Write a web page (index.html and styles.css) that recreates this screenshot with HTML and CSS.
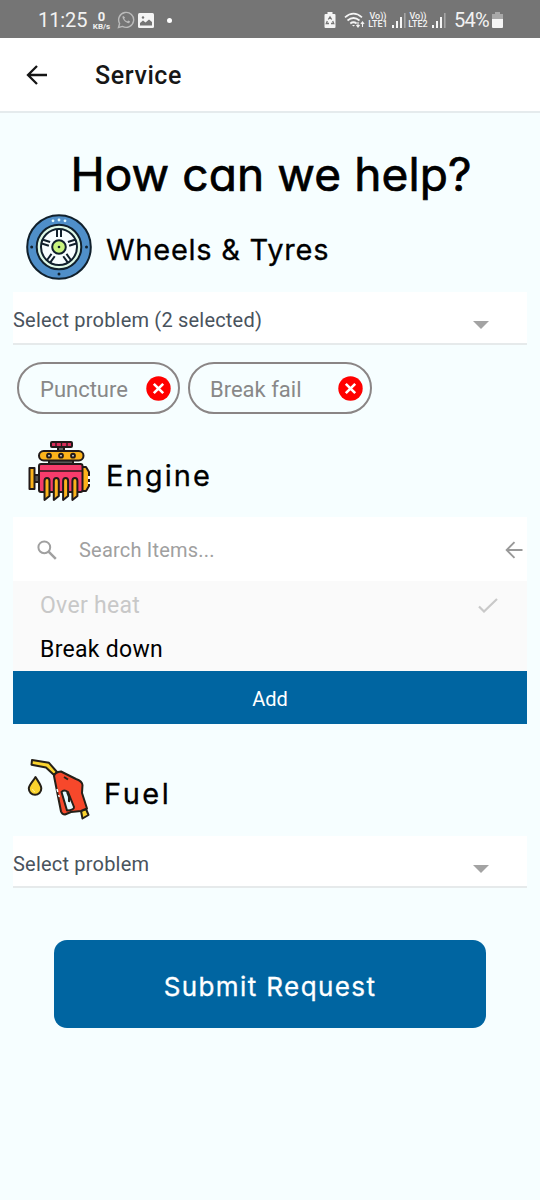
FILE: index.html
```html
<!DOCTYPE html>
<html lang="en">
<head>
<meta charset="utf-8">
<title>Service</title>
<link rel="stylesheet" href="styles.css">
</head>
<body>
<div class="status">
  <span class="clock">11:25</span>
  <span class="rate"><b>0</b><small>KB/s</small></span>
  <svg class="whatsapp" width="18" height="18" viewBox="0 0 18 18" fill="none" stroke="#bababa" stroke-width="1.4"><path d="M1.5 16.5l1.1-4A7.5 7.5 0 1 1 5.5 15.400z"/><path d="M6 4.800c-2 2 2.500 7.500 6 7.500l1.200-1.700-2-1.100-1 1C8.700 9.900 7.500 8.700 7.200 7.600l.9-1z" fill="#bababa" stroke="none"/></svg>
  <svg class="photo" width="16" height="15" viewBox="0 0 16 15"><rect width="16" height="15" rx="1.500" fill="#f4f4f4"/><path d="M2 12.500V10l3-2.500 2.500 2L11 6.500 14 9v3.500z" fill="#757575"/><circle cx="5" cy="4.500" r="1.200" fill="#757575"/></svg>
  <i class="dot"></i>
  <span class="right">
    <svg class="saver" width="12" height="16" viewBox="0 0 12 16"><path d="M3.500 0h5v2H10.500a1 1 0 0 1 1 1V15a1 1 0 0 1-1 1h-9a1 1 0 0 1-1-1V3a1 1 0 0 1 1-1h2z" fill="#f5f5f5"/><path d="M4.300 7.500L6 5l1.700 2.500M8.700 9l1 2.500H7M5 11.500H2.300l1-2.500" fill="none" stroke="#757575" stroke-width="1.300"/></svg>
    <svg class="wifi" width="22" height="17" viewBox="0 0 22 17" fill="none" stroke="#f5f5f5" stroke-width="1.700"><path d="M1 5.300Q9.500-2 18 5.300M3.500 8.500q6-5 12 0M6.300 11.500q3.200-2.500 6.300 0"/><path d="M8 13l1.500 1.500L11 13z" fill="#f5f5f5" stroke="none"/><path d="M14 10v5m-1.600-2l1.600 2 1.600-2M18.500 15V10m-1.600 2l1.600-2 1.600 2" stroke-width="1.100"/></svg>
    <span class="lte"><span>Vo))</span><span>LTE1</span></span>
    <svg class="bars" width="14" height="15" viewBox="0 0 14 15" fill="#f5f5f5"><path d="M0 12h2v3H0zM4 8h2v7H4zM8 4h2v11H8z"/><path d="M12 0h1.600v15H12z" fill="#a5a5a5"/></svg>
    <span class="lte"><span>Vo))</span><span>LTE2</span></span>
    <svg class="bars" width="14" height="15" viewBox="0 0 14 15" fill="#f5f5f5"><path d="M0 12h2v3H0zM4 8h2v7H4zM8 4h2v11H8z"/><path d="M12 0h1.600v15H12z" fill="#a5a5a5"/></svg>
    <span class="pct">54%</span>
    <svg class="battery" width="11" height="16" viewBox="0 0 11 16"><path d="M3 0h5v2h3v5H0V2h3z" fill="#a8a8a8"/><path d="M0 7h11v8a1 1 0 0 1-1 1H1a1 1 0 0 1-1-1z" fill="#f5f5f5"/></svg>
  </span>
</div>
<header class="appbar">
  <svg width="22" height="20" viewBox="0 0 22 20" fill="none" stroke="#151515" stroke-width="2.300"><path d="M21 10H2M11 1L2 10l9 9"/></svg>
  <span class="bar-title">Service</span>
</header>
<main>
  <h1><span>How can we help?</span></h1>

  <section class="group wheels">
    <h2>
      <svg width="66" height="66" viewBox="0 0 66 66" fill="none" stroke="#10202c" stroke-width="2">
        <circle cx="33" cy="33" r="31.800" fill="#4f8fc9"/>
        <circle cx="33" cy="33" r="22.300" fill="#dff9e7"/>
        <circle cx="33" cy="33" r="18" fill="#f7feff"/>
        <g><path id="spoke" d="M31 15.500v7.500M35 15.500v7.500"/><use href="#spoke" transform="rotate(72 33 33)"/><use href="#spoke" transform="rotate(144 33 33)"/><use href="#spoke" transform="rotate(216 33 33)"/><use href="#spoke" transform="rotate(288 33 33)"/></g>
        <circle cx="33" cy="33" r="6.800" fill="#c9f580"/>
        <g fill="#10202c" stroke="none"><circle cx="33" cy="33" r="1.300"/><circle cx="5.700" cy="33" r="1.500"/><circle cx="60.500" cy="33" r="1.500"/><circle cx="33" cy="60" r="1.500"/></g>
        <g fill="#e2faff" stroke="none"><circle cx="27" cy="6.800" r="1.400"/><circle cx="33" cy="6" r="1.400"/><circle cx="39" cy="6.800" r="1.400"/></g>
      </svg>
      <span>Wheels &amp; Tyres</span>
    </h2>
    <div class="select"><span>Select problem (2 selected)</span><i class="caret"></i></div>
    <div class="chips">
      <div class="chip first"><span>Puncture</span><svg width="25" height="25" viewBox="0 0 25 25"><circle cx="12.500" cy="12.500" r="12.200" fill="#f00"/><path d="M7.800 7.800l9.400 9.400M17.200 7.800l-9.400 9.400" stroke="#fff" stroke-width="2.600"/></svg></div>
      <div class="chip second"><span>Break fail</span><svg width="25" height="25" viewBox="0 0 25 25"><circle cx="12.500" cy="12.500" r="12.200" fill="#f00"/><path d="M7.800 7.800l9.400 9.400M17.200 7.800l-9.400 9.400" stroke="#fff" stroke-width="2.600"/></svg></div>
    </div>
  </section>

  <section class="group engine">
    <h2>
      <svg width="66" height="64" viewBox="0 0 66 64" stroke="#221a1a" stroke-width="2" stroke-linejoin="round">
        <path d="M32 6h6v6h-6z" fill="#666"/>
        <rect x="25" y="2" width="21" height="5" rx="1" fill="#d82e5a"/><path d="M30 2v5M35.500 2v5M41 2v5" stroke-width="1.300"/>
        <path d="M23 19h24v6H23z" fill="#595959"/>
        <rect x="13" y="11" width="44.500" height="9.500" rx="4.700" fill="#fcb31b"/>
        <g fill="#ddd"><circle cx="23" cy="15.700" r="1.900"/><circle cx="35" cy="15.700" r="1.900"/><circle cx="47" cy="15.700" r="1.900"/></g>
        <path d="M8 35h6v7H8z" fill="#555"/><rect x="3.500" y="28" width="5" height="21" fill="#fcb31b"/>
        <path d="M56 27h4l3 5v14l-3 5h-4z" fill="#fcb31b"/><path d="M63 36v3m0 3v2" stroke="#f7feff"/>
        <rect x="13" y="24" width="43.500" height="28" rx="2" fill="#f73c6b"/><path d="M13 31h43" stroke-width="1.600"/>
        <path id="pipe" d="M18.500 60V41q0-3 2.500-3t2.500 3v15z" fill="#fcb31b"/><use href="#pipe" x="9.300"/><use href="#pipe" x="18.600"/><use href="#pipe" x="27.900"/>
      </svg>
      <span>Engine</span>
    </h2>
    <div class="picker">
      <div class="search">
        <svg class="glass" width="20" height="20" viewBox="0 0 20 20" fill="none" stroke="#a0a0a0" stroke-width="2"><circle cx="7.300" cy="7.300" r="5.900"/><path d="M11.600 11.600l7.200 7.200" stroke-width="2.500"/></svg>
        <span>Search Items...</span>
        <svg class="back" width="18" height="18" viewBox="0 0 18 18" fill="none" stroke="#999" stroke-width="1.900"><path d="M17.500 9H2M9.500 1.200L1.700 9l7.800 7.800"/></svg>
      </div>
      <div class="options">
        <div class="option picked"><span>Over heat</span><svg width="20" height="15" viewBox="0 0 20 15" fill="none" stroke="#c9c9c9" stroke-width="2.200"><path d="M1 8.500l5 5L19 1"/></svg></div>
        <div class="option"><span>Break down</span></div>
      </div>
      <div class="add">Add</div>
    </div>
  </section>

  <section class="group fuel">
    <h2>
      <svg width="66" height="64" viewBox="0 0 66 64" stroke="#252018" stroke-width="2" stroke-linejoin="round">
        <path d="M6 2l17 2.800L31 14l-3 3-8-7.500L5.500 6.800z" fill="#fbd42d"/>
        <path d="M9.500 19c3 5 5.800 8 5.800 11.500a6 6 0 0 1-12.500 0C2.800 27 7 23.500 9.500 19z" fill="#fbd42d"/><path d="M6.500 31q.5 2.300 2.500 3" fill="none" stroke="#fff09a" stroke-width="1"/>
        <path d="M55 53l5-2 2.500 6-6 3.500z" fill="#fbd42d"/>
        <path d="M28 18q1-4 7-4.500l15 7.500q6 2 6.500 6l-.5 8 5 15.500-6 2.500-10 1-6 2.500q-3 0-4-3z" fill="#f7482b"/>
        <path d="M35.500 34q2.500-3 6.500 0l6 15q.4 3-7 3.500z" fill="#e4faff"/>
        <path d="M41 34q3 5 2 10M38 19l4 2.500" fill="none"/>
        <path d="M31 31l.8 3m.8 3l.7 2" stroke="#f7feff" stroke-width="1.500"/>
      </svg>
      <span>Fuel</span>
    </h2>
    <div class="select"><span>Select problem</span><i class="caret"></i></div>
  </section>

  <div class="submit"><span>Submit Request</span></div>
</main>
</body>
</html>
```
FILE: styles.css
```css
* { box-sizing: border-box; }
body { margin: 0; width: 540px; height: 1200px; overflow: hidden; background: #f6feff; font-family: Roboto, sans-serif; color: #000; }
svg { display: block; flex: none; }
.status { height: 38px; background: #757575; color: #f2f2f2; display: flex; align-items: center; padding: 2px 37px 0 38px; }
.clock { font-size: 20px; width: 54px; letter-spacing: -.1px; }
.rate { width: 19px; display: flex; flex-direction: column; align-items: center; line-height: 1; }
.rate b { font-size: 13px; line-height: 12px; }
.rate small { font-size: 8px; line-height: 7px; font-weight: 700; }
.whatsapp { margin-left: 6px; }
.photo { margin-left: 3px; }
.dot { width: 5px; height: 5px; border-radius: 50%; background: #fff; margin-left: 13px; }
.right { margin-left: auto; display: flex; align-items: center; }
.wifi { margin: 0 0 0 8px; }
.lte { display: flex; flex-direction: column; align-items: center; width: 20px; margin-left: 2px; font-size: 9px; line-height: 8px; font-weight: 500; white-space: nowrap; }
.bars { margin-left: 4px; }
.pct { font-size: 20px; margin-left: 8px; width: 36px; letter-spacing: -.8px; }
.battery { margin-left: 2px; }
.appbar { height: 75px; background: #fff; border-bottom: 2px solid #e5ebed; display: flex; align-items: center; padding: 1px 26px 0; }
.bar-title { margin-left: 47px; padding-top: 1px; font-size: 25px; font-weight: 500; color: #171717; letter-spacing: .6px; }
main { padding: 30px 13px 0; }
h1, h2, .submit { font-family: Inter, sans-serif; font-feature-settings: "cv11"; font-weight: 400; stroke-linejoin: round; -webkit-text-stroke: .3px currentColor; }
h1 { margin: 0; height: 64px; line-height: 62px; text-align: center; font-size: 46px; white-space: nowrap; letter-spacing: .1px; padding-left: 2px; -webkit-text-stroke-width: .7px; }
h2 { margin: 0; padding-left: 13px; display: flex; align-items: center; gap: 14px; font-size: 29px; letter-spacing: .75px; }
.wheels { padding-top: 6px; height: 233px; }
.wheels h2 { height: 67px; }
.wheels h2 span { padding-top: 6px; }
.select { height: 53px; background: #fff; border-bottom: 2px solid #e6eaeb; display: flex; align-items: center; justify-content: space-between; padding: 5px 38px 0 0; color: #49535d; font-size: 20px; letter-spacing: .2px; }
.wheels .select { margin-top: 12px; }
.caret { border: 8px solid transparent; border-top-color: #a3a3a3; border-bottom: 0; margin-top: 10px; }
.chips { display: flex; gap: 8px; padding: 17px 4px 0; }
.chip { height: 52px; border: 2.500px solid #8a8585; border-radius: 26px; display: flex; align-items: center; justify-content: space-between; padding: 1px 7px 0 21px; color: #888; font-size: 22px; }
.chip span { padding-top: 2px; }
.chip.first { width: 163px; }
.chip.second { width: 184px; padding-left: 20px; }
.engine { height: 318px; }
.engine h2 { height: 64px; letter-spacing: 2.100px; }
.engine h2 span { padding-top: 6px; }
.picker { margin-top: 13px; }
.search { height: 64px; background: #fff; display: flex; align-items: center; padding: 1px 4px 0 24px; font-size: 20px; color: #a0a0a0; letter-spacing: .2px; }
.search span { margin-left: 22px; }
.back { margin-left: auto; }
.options { height: 90px; background: #fafafa; padding: 2px 29px 0 27px; }
.option { height: 44px; display: flex; align-items: center; justify-content: space-between; font-size: 23px; letter-spacing: .3px; }
.picked { color: #c8c8c8; }
.add { height: 53px; background: #0065a1; color: #fff; display: flex; align-items: center; justify-content: center; padding-top: 2px; font-size: 20px; }
.fuel { height: 130px; }
.fuel h2 { height: 64px; letter-spacing: 2.500px; gap: 12px; }
.fuel h2 span { padding-top: 6px; }
.fuel .select { margin-top: 14px; height: 52px; }
.submit { margin: 52px 41px 0; height: 88px; border-radius: 13px; background: #0065a1; color: #fff; display: flex; align-items: center; justify-content: center; font-size: 26px; letter-spacing: 1.400px; padding-top: 5px; }
```
